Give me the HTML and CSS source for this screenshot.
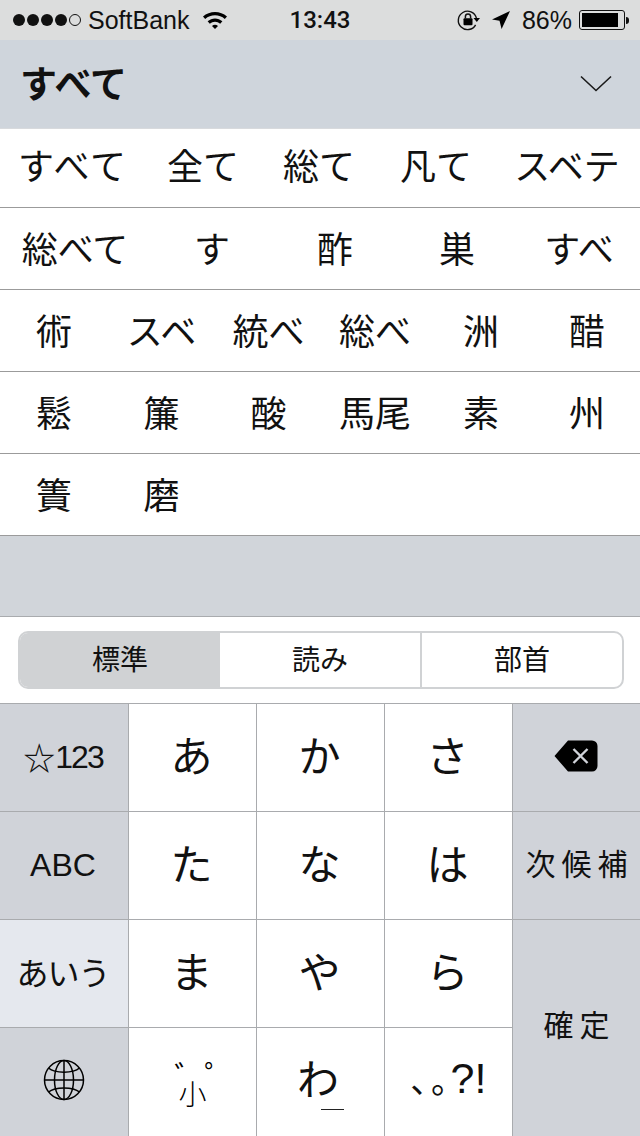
FILE: index.html
```html
<!DOCTYPE html>
<html lang="ja">
<head>
  <meta charset="UTF-8">
  <title>すべて</title>
  <link rel="stylesheet" href="styles.css">
</head>
<body>
  <div class="status">
    <div class="status-left">
      <span class="dot"></span><span class="dot"></span><span class="dot"></span><span class="dot"></span><span class="dot empty"></span>
      <span class="carrier">SoftBank</span>
      <svg class="wifi" width="26" height="20" viewBox="0 0 26 20">
        <path d="M1 7.5C7.5 1.5 18.5 1.5 25 7.5L22.8 9.9C17.4 5 8.6 5 3.2 9.9Z"/>
        <path d="M5.6 12.3C9.9 8.4 16.1 8.4 20.4 12.3L18.2 14.7C15.2 12 10.8 12 7.8 14.7Z"/>
        <path d="M10 16.9C11.8 15.3 14.2 15.3 16 16.9L13 20Z"/>
      </svg>
    </div>
    <div class="time">13:43</div>
    <div class="status-right">
      <svg class="lock" width="24" height="22" viewBox="0 0 24 22">
        <path d="M18.6 15.8A9.2 9.2 0 1 1 19.4 9" fill="none" stroke="#111" stroke-width="1.4"/>
        <path d="M16.5 9H23L19.8 13Z"/>
        <rect x="6.5" y="9.2" width="9" height="7" rx="1"/>
        <path d="M8.4 9.5V7.6A2.6 2.6 0 0 1 13.6 7.6V9.5" fill="none" stroke="#111" stroke-width="1.5"/>
      </svg>
      <svg class="arrow" width="20" height="20" viewBox="0 0 20 20">
        <path d="M19 1L1 9.4L8.5 10.8L10.6 19Z"/>
      </svg>
      <span class="battery-pct">86%</span>
      <div class="battery"><div class="battery-fill"></div></div>
      <div class="battery-tip"></div>
    </div>
  </div>

  <div class="header">
    <div class="header-title">すべて</div>
    <svg width="32" height="18" viewBox="0 0 32 18">
      <path d="M1 1.5L16 15.5L31 1.5" fill="none" stroke="#1a1a1a" stroke-width="1.6"/>
    </svg>
  </div>

  <div class="cand-row row-a"><span class="cand-wide">すべて</span><span>全て</span><span>総て</span><span>凡て</span><span>スベテ</span></div>
  <div class="cand-row row-b"><span>総べて</span><span>す</span><span>酢</span><span>巣</span><span>すべ</span></div>
  <div class="cand-row row-c"><span>術</span><span>スベ</span><span>統べ</span><span>総べ</span><span>洲</span><span>醋</span></div>
  <div class="cand-row row-c"><span>鬆</span><span>簾</span><span>酸</span><span>馬尾</span><span>素</span><span>州</span></div>
  <div class="cand-row row-c"><span>簀</span><span>磨</span></div>

  <div class="spacer"></div>

  <div class="seg-bar">
    <div class="seg">
      <div class="seg-item active">標準</div>
      <div class="seg-item">読み</div>
      <div class="seg-item divided">部首</div>
    </div>
  </div>

  <div class="kb">
    <div class="key fn label"><span class="star">☆</span><span class="num">123</span></div>
    <div class="key kana">あ</div>
    <div class="key kana">か</div>
    <div class="key kana">さ</div>
    <div class="key fn last back">
      <svg width="44" height="32" viewBox="0 0 44 32">
        <path d="M14 0.5H38A5.5 5.5 0 0 1 43.5 6V26A5.5 5.5 0 0 1 38 31.5H14L0.5 16Z" fill="#000"/>
        <path d="M19.5 9L33.5 23M33.5 9L19.5 23" stroke="#d0d3d9" stroke-width="2.4"/>
      </svg>
    </div>

    <div class="key fn label latin">ABC</div>
    <div class="key kana">た</div>
    <div class="key kana">な</div>
    <div class="key kana">は</div>
    <div class="key fn last wide-text">次候補</div>

    <div class="key fn label mode">あいう</div>
    <div class="key kana">ま</div>
    <div class="key kana">や</div>
    <div class="key kana">ら</div>
    <div class="key fn last tall wide-text">確定</div>

    <div class="key fn globe">
      <svg width="42" height="42" viewBox="0 0 42 42" fill="none" stroke="#000" stroke-width="1.5">
        <circle cx="21" cy="21" r="19.5"/>
        <ellipse cx="21" cy="21" rx="9.5" ry="19.5"/>
        <path d="M21 1.5V40.5M1.5 21H40.5"/>
        <path d="M5.5 9C12 14.5 30 14.5 36.5 9M5.5 33C12 27.5 30 27.5 36.5 33"/>
      </svg>
    </div>
    <div class="key small-key"><span class="mark">゛</span><span class="small">小</span><span class="mark">゜</span></div>
    <div class="key wa"><span class="wa-char">わ</span><span class="wa-line"></span></div>
    <div class="key punct"><span class="punct-ja">、。</span><span class="punct-en">?!</span></div>
  </div>
</body>
</html>
```

FILE: styles.css
```css
* {
    box-sizing: border-box;
}
body {
    margin: 0;
    width: 640px;
    height: 1136px;
    overflow: hidden;
    background: #fff;
    color: #111;
    font-family: "Noto Sans CJK JP", "Liberation Sans", sans-serif;
}

/* status bar */
.status {
    height: 40px;
    background: #dcdddd;
    display: grid;
    grid-template-columns: 1fr auto 1fr;
    align-items: center;
    font-family: "Liberation Sans", sans-serif;
    font-size: 25px;
}
.status-left, .status-right {
    display: flex;
    align-items: center;
}
.status-left {
    padding-left: 13px;
    gap: 2px;
}
.dot {
    width: 12px;
    height: 12px;
    border-radius: 50%;
    background: #111;
}
.dot.empty {
    background: none;
    border: 1px solid #111;
}
.carrier {
    margin-left: 5px;
}
.wifi {
    margin-left: 11px;
    margin-top: -2px;
}
.time {
    font-family: Roboto, sans-serif;
    font-weight: 500;
    font-size: 24px;
}
.status-right {
    justify-content: flex-end;
    padding-right: 11px;
}
.lock {
    margin-right: 10px;
}
.arrow {
    margin-right: 11px;
}
.battery-pct {
    margin-right: 7px;
}
.battery {
    width: 46px;
    height: 20px;
    border: 1px solid #111;
    border-radius: 3px;
    padding: 2px;
}
.battery-fill {
    width: 36px;
    height: 100%;
    background: #000;
}
.battery-tip {
    width: 3px;
    height: 7px;
    margin-left: 1px;
    background: #111;
    border-radius: 0 3px 3px 0;
}

/* candidate header */
.header {
    height: 89px;
    background: #cfd5dc;
    border-bottom: 1px solid #d8dadd;
    display: flex;
    align-items: center;
    justify-content: space-between;
    padding: 0 28px 0 20px;
}
.header-title {
    font-size: 37px;
    font-weight: 700;
    padding-bottom: 4px;
}

/* candidates */
.cand-row {
    display: grid;
    height: 82px;
    padding-bottom: 4px;
    border-bottom: 1px solid #9b9b9b;
    justify-items: center;
    align-items: center;
    font-size: 36px;
    line-height: 1;
}
.row-a {
    height: 79px;
    padding-bottom: 8px;
    grid-template-columns: 146px 114px 118px 116px 146px;
}
.row-b {
    grid-template-columns: 150px 124px 122px 122px 122px;
}
.row-c {
    grid-template-columns: 108px 107px 107px 106px 106px 106px;
}
.cand-wide {
    letter-spacing: 2px;
}
.spacer {
    height: 81px;
    background: #d1d5da;
    border-bottom: 1px solid #a9abae;
}

/* segmented control */
.seg-bar {
    height: 86px;
    padding: 14px 16px 14px 18px;
}
.seg {
    display: grid;
    grid-template-columns: 200px 200px 1fr;
    height: 58px;
    border: 2px solid #d0d2d4;
    border-radius: 10px;
    overflow: hidden;
}
.seg-item {
    display: flex;
    align-items: center;
    justify-content: center;
    padding-bottom: 4px;
    font-size: 28px;
}
.seg-item.divided {
    border-left: 2px solid #d0d2d4;
}
.seg-item.active {
    background: #d0d2d4;
}

/* keyboard */
.kb {
    display: grid;
    grid-template-columns: 129px 128px 128px 128px 127px;
    grid-template-rows: 108px 108px 108px 109px;
    border-top: 1px solid #a9abae;
}
.key {
    display: flex;
    align-items: center;
    justify-content: center;
    border-right: 1px solid #a9abae;
    border-bottom: 1px solid #a9abae;
}
.key.fn {
    background: #d0d3d9;
}
.key.last {
    border-right: 0;
}
.key.tall {
    grid-row: span 2;
    border-bottom: 0;
}
.kana {
    font-size: 42px;
    padding: 0 2px 8px 0;
}
.back {
    padding: 0 1px 4px 0;
}
.globe {
    padding-bottom: 6px;
}
.label {
    font-size: 30px;
    padding-right: 2px;
}
.label .star {
    font-size: 32px;
    margin-top: -4px;
}
.label .num, .latin {
    font-family: "Liberation Sans", sans-serif;
    font-size: 32px;
}
.label .num {
    letter-spacing: -2px;
}
.mode {
    background: #e5e8ee !important;
    font-size: 32px;
    letter-spacing: -1px;
    padding-bottom: 6px;
}
.wide-text {
    font-size: 30px;
    letter-spacing: 6px;
    padding-left: 6px;
    padding-bottom: 8px;
}
.wide-text.tall {
    padding-bottom: 12px;
}
.key:nth-last-child(-n+4) {
    border-bottom: 0;
}
.small-key {
    font-size: 28px;
    color: #000;
}
.mark {
    font-size: 30px;
    margin: -18px -26px 0 -2px;
}
.small {
    margin-top: 20px;
    font-weight: 300;
}
.wa-char {
    font-size: 42px;
    margin-top: -12px;
}
.wa-line {
    width: 23px;
    height: 1px;
    background: #222;
    margin: 54px 0 0 -18px;
}
.punct {
    font-size: 34px;
    padding-bottom: 8px;
}
.punct-ja {
    font-feature-settings: "palt";
    letter-spacing: 3px;
}
.punct-en {
    font-family: "Liberation Sans", sans-serif;
    font-size: 43px;
}
```
